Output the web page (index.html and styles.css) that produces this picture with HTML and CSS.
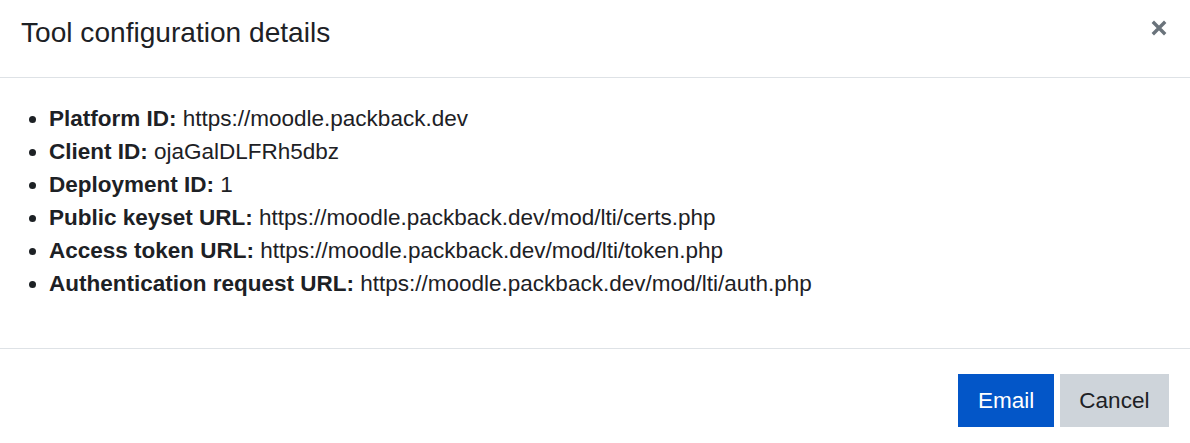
FILE: index.html
```html
<!DOCTYPE html>
<html lang="en">
<head>
<meta charset="utf-8">
<title>Tool configuration details</title>
<link rel="stylesheet" href="styles.css">
</head>
<body>
<div class="modal">
  <div class="modal-header">
    <h5 class="modal-title">Tool configuration details</h5>
    <button class="close" type="button" aria-label="Close">
      <svg width="16" height="16" viewBox="0 0 16 16" aria-hidden="true"><path d="M1.8 1.8 L14.2 14.2 M14.2 1.8 L1.8 14.2" stroke="#6a737b" stroke-width="3.4" stroke-linecap="butt" fill="none"/></svg>
    </button>
  </div>
  <div class="modal-body">
    <ul class="details">
      <li><strong>Platform ID:</strong> https://moodle.packback.dev</li>
      <li><strong>Client ID:</strong> ojaGalDLFRh5dbz</li>
      <li><strong>Deployment ID:</strong> 1</li>
      <li><strong>Public keyset URL:</strong> https://moodle.packback.dev/mod/lti/certs.php</li>
      <li><strong>Access token URL:</strong> https://moodle.packback.dev/mod/lti/token.php</li>
      <li><strong>Authentication request URL:</strong> https://moodle.packback.dev/mod/lti/auth.php</li>
    </ul>
  </div>
  <div class="modal-footer">
    <button class="btn btn-primary" type="button">Email</button>
    <button class="btn btn-secondary" type="button">Cancel</button>
  </div>
</div>
</body>
</html>
```

FILE: styles.css
```css
* { box-sizing: border-box; }
html, body {
  margin: 0;
  padding: 0;
  background: #fff;
}
body {
  font-family: "Liberation Sans", Arial, sans-serif;
  color: #1d2125;
  font-size: 22.5px;
  line-height: 33px;
}
.modal {
  width: 1190px;
  height: 443px;
  display: flex;
  flex-direction: column;
  background: #fff;
}
.modal-header {
  display: flex;
  align-items: flex-start;
  justify-content: space-between;
  height: 78px;
  padding: 16px 23px 0 21px;
  border-bottom: 1px solid #dee2e6;
}
.modal-title {
  margin: 0;
  font-size: 28.1px;
  font-weight: 400;
  line-height: 33px;
}
.close {
  border: 0;
  background: transparent;
  padding: 0;
  margin: 4px 0 0 0;
  width: 16px;
  height: 16px;
  display: flex;
  cursor: pointer;
}
.modal-body {
  padding: 24px 22px 0 22px;
  height: 271px;
  border-bottom: 1px solid #dee2e6;
}
.details {
  margin: 0;
  padding-left: 27px;
}
.details strong { font-weight: 700; }
.modal-footer {
  display: flex;
  justify-content: flex-end;
  gap: 6px;
  padding: 25px 21px 0 0;
}
.btn {
  height: 53px;
  border: 0;
  border-radius: 0;
  padding: 0 19.6px;
  font-family: "Liberation Sans", Arial, sans-serif;
  font-size: 22.5px;
  line-height: 53px;
  cursor: pointer;
}
.btn-primary {
  background: #0356c8;
  color: #fff;
}
.btn-secondary {
  background: #ced4da;
  color: #1d2125;
}
```
